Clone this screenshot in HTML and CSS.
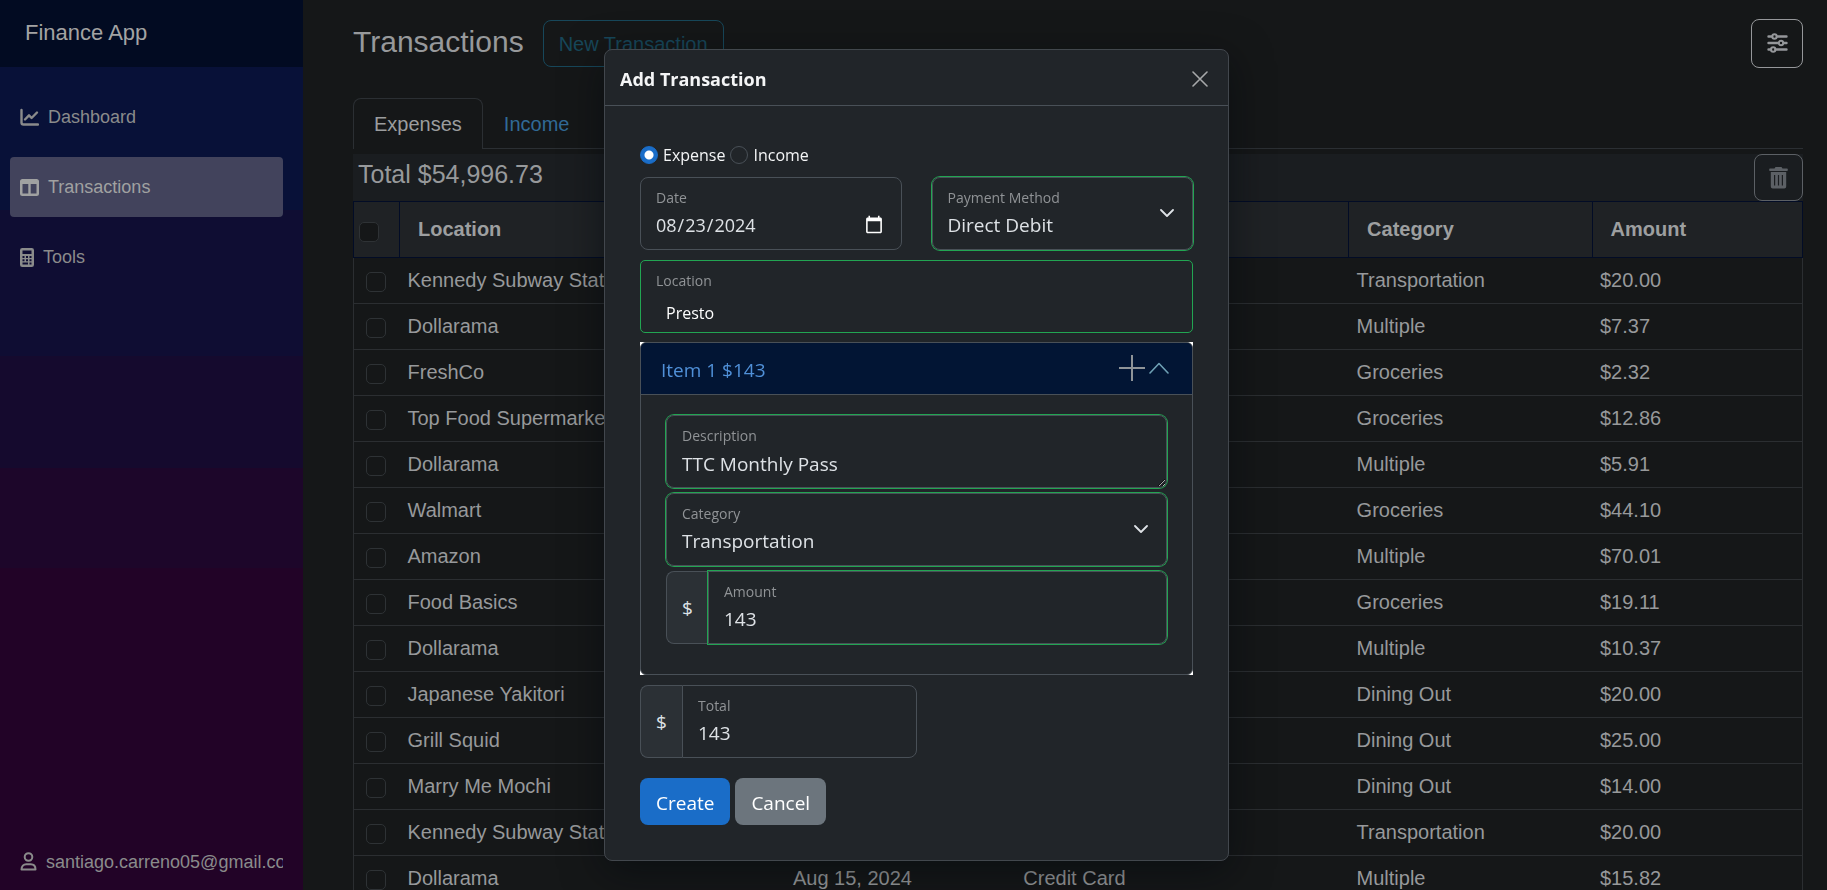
FILE: index.html
```html
<!DOCTYPE html>
<html lang="en">
<head>
<meta charset="utf-8">
<title>Finance App - Transactions</title>
<link rel="stylesheet" href="styles.css">
</head>
<body>
<div class="page">
  <aside class="sidebar">
    <div class="brand-bar"><a class="brand" href="#">Finance App</a></div>
    <nav class="nav">
      <a class="nav-link" href="#">
        <svg width="19" height="19" viewBox="0 0 19 19" fill="none" stroke="currentColor" stroke-width="2.4" stroke-linecap="round" stroke-linejoin="round"><path d="M1.500 2v12.500a2 2 0 0 0 2 2H18"/><path d="M5 11.500l4-4.200 2.600 2.700L17 4.500"/></svg>
        <span>Dashboard</span>
      </a>
      <a class="nav-link active" href="#">
        <svg width="19" height="19" viewBox="0 0 19 19"><path fill="currentColor" fill-rule="evenodd" d="M2.500 1h14A2.500 2.500 0 0 1 19 3.500v12a2.500 2.500 0 0 1-2.500 2.500h-14A2.500 2.500 0 0 1 0 15.500v-12A2.500 2.500 0 0 1 2.500 1zM2.500 6v9.500h5.800V6zM10.700 6v9.500h5.800V6z"/></svg>
        <span>Transactions</span>
      </a>
      <a class="nav-link" href="#">
        <svg width="14" height="19" viewBox="0 0 14 19"><path fill="currentColor" fill-rule="evenodd" d="M2.300 0h9.400A2.300 2.300 0 0 1 14 2.300v14.400a2.300 2.300 0 0 1-2.300 2.300H2.300A2.300 2.300 0 0 1 0 16.700V2.300A2.300 2.300 0 0 1 2.300 0zM2.500 2.500v3.500h9V2.500zM2.500 8v2h2V8zM6 8v2h2V8zM9.500 8v2h2V8zM2.500 11.300v2h2v-2zM6 11.300v2h2v-2zM9.500 11.300v2h2v-2zM2.500 14.600v2H8v-2zM9.500 14.600v2h2v-2z"/></svg>
        <span>Tools</span>
      </a>
      <a class="nav-link account" href="#">
        <svg width="17" height="19" viewBox="0 0 17 19" fill="none" stroke="currentColor" stroke-width="2"><circle cx="8.500" cy="5" r="3.800"/><path stroke-linejoin="round" d="M1.500 17.500c0-3.400 2-5.300 4.800-5.300h4.400c2.800 0 4.800 1.900 4.800 5.300z"/></svg>
        <span>santiago.carreno05@gmail.com</span>
      </a>
    </nav>
  </aside>

  <main class="content">
    <header class="page-head">
      <h1>Transactions</h1>
      <button class="btn-new" type="button">New Transaction</button>
      <button class="btn-filter" type="button" aria-label="Filters">
        <svg width="21" height="20" viewBox="0 0 21 20" fill="none" stroke="currentColor" stroke-width="2.400" stroke-linecap="round"><path d="M1.500 3.500h3.500M10 3.500h9.500M1.500 10h9.500M17 10h2.500M1.500 16.500h2.500M8.500 16.500h11"/><circle cx="7.500" cy="3.500" r="2.200" stroke-width="2"/><circle cx="14" cy="10" r="2.200" stroke-width="2"/><circle cx="6.200" cy="16.500" r="2.200" stroke-width="2"/></svg>
      </button>
    </header>

    <nav class="tabs">
      <a class="tab active" href="#">Expenses</a>
      <a class="tab" href="#">Income</a>
    </nav>

    <div class="summary">
      <span class="summary-total">Total $54,996.73</span>
      <button class="btn-trash" type="button" aria-label="Delete">
        <svg width="19" height="22" viewBox="0 0 19 22"><path fill="currentColor" fill-rule="evenodd" d="M6.500 0h6l1 1.500H18a.8.8 0 0 1 .8.8v1a.8.8 0 0 1-.8.8H1a.8.8 0 0 1-.8-.8v-1a.8.8 0 0 1 .8-.8h4.500zM1.800 5h15.400v14.500a2 2 0 0 1-2 2H3.800a2 2 0 0 1-2-2zM5 8v10.500h1.200V8zM8.900 8v10.500h1.200V8zM12.800 8v10.500H14V8z"/></svg>
      </button>
    </div>

    <table class="grid">
      <colgroup><col class="c-check"><col class="c-location"><col class="c-date"><col class="c-method"><col class="c-category"><col class="c-amount"></colgroup>
      <thead>
        <tr><th><input class="check" type="checkbox" aria-label="Select all"></th><th>Location</th><th></th><th></th><th>Category</th><th>Amount</th></tr>
      </thead>
      <tbody>
        <tr><td><input class="check" type="checkbox" aria-label="Select row"></td><td>Kennedy Subway Station</td><td></td><td></td><td>Transportation</td><td>$20.00</td></tr>
        <tr><td><input class="check" type="checkbox" aria-label="Select row"></td><td>Dollarama</td><td></td><td></td><td>Multiple</td><td>$7.37</td></tr>
        <tr><td><input class="check" type="checkbox" aria-label="Select row"></td><td>FreshCo</td><td></td><td></td><td>Groceries</td><td>$2.32</td></tr>
        <tr><td><input class="check" type="checkbox" aria-label="Select row"></td><td>Top Food Supermarket</td><td></td><td></td><td>Groceries</td><td>$12.86</td></tr>
        <tr><td><input class="check" type="checkbox" aria-label="Select row"></td><td>Dollarama</td><td></td><td></td><td>Multiple</td><td>$5.91</td></tr>
        <tr><td><input class="check" type="checkbox" aria-label="Select row"></td><td>Walmart</td><td></td><td></td><td>Groceries</td><td>$44.10</td></tr>
        <tr><td><input class="check" type="checkbox" aria-label="Select row"></td><td>Amazon</td><td></td><td></td><td>Multiple</td><td>$70.01</td></tr>
        <tr><td><input class="check" type="checkbox" aria-label="Select row"></td><td>Food Basics</td><td></td><td></td><td>Groceries</td><td>$19.11</td></tr>
        <tr><td><input class="check" type="checkbox" aria-label="Select row"></td><td>Dollarama</td><td></td><td></td><td>Multiple</td><td>$10.37</td></tr>
        <tr><td><input class="check" type="checkbox" aria-label="Select row"></td><td>Japanese Yakitori</td><td></td><td></td><td>Dining Out</td><td>$20.00</td></tr>
        <tr><td><input class="check" type="checkbox" aria-label="Select row"></td><td>Grill Squid</td><td></td><td></td><td>Dining Out</td><td>$25.00</td></tr>
        <tr><td><input class="check" type="checkbox" aria-label="Select row"></td><td>Marry Me Mochi</td><td></td><td></td><td>Dining Out</td><td>$14.00</td></tr>
        <tr><td><input class="check" type="checkbox" aria-label="Select row"></td><td>Kennedy Subway Station</td><td></td><td></td><td>Transportation</td><td>$20.00</td></tr>
        <tr><td><input class="check" type="checkbox" aria-label="Select row"></td><td>Dollarama</td><td>Aug 15, 2024</td><td>Credit Card</td><td>Multiple</td><td>$15.82</td></tr>
      </tbody>
    </table>
  </main>
</div>

<div class="overlay">
  <section class="modal" role="dialog" aria-labelledby="modal-title">
    <header class="modal-head">
      <h2 id="modal-title">Add Transaction</h2>
      <button class="btn-close" type="button" aria-label="Close">
        <svg width="16" height="16" viewBox="0 0 16 16" fill="none" stroke="currentColor" stroke-width="1.600" stroke-linecap="round"><path d="M1 1l14 14M15 1L1 15"/></svg>
      </button>
    </header>
    <form class="modal-body">
      <div class="radios">
        <input class="radio" type="radio" name="kind" id="kind-expense" checked><label for="kind-expense">Expense</label>
        <input class="radio" type="radio" name="kind" id="kind-income"><label for="kind-income">Income</label>
      </div>

      <div class="row">
        <div class="field">
          <input class="control" type="date" id="date" value="2024-08-23">
          <label for="date">Date</label>
        </div>
        <div class="field valid">
          <select class="control" id="method"><option>Direct Debit</option></select>
          <label for="method">Payment Method</label>
          <svg class="chevron" width="14" height="9" viewBox="0 0 14 9" fill="none" stroke="currentColor" stroke-width="1.800" stroke-linecap="round" stroke-linejoin="round"><path d="M1 1l6 6L13 1"/></svg>
        </div>
      </div>

      <div class="field location">
        <input class="control" type="text" id="location" value="Presto">
        <label for="location">Location</label>
      </div>

      <div class="items">
        <div class="item">
          <div class="item-head">
            <span class="item-title">Item 1 $143</span>
            <button class="icon-btn plus" type="button" aria-label="Add item">
              <svg width="26" height="26" viewBox="0 0 26 26" fill="none" stroke="currentColor" stroke-width="2"><path d="M13 0v26M0 13h26"/></svg>
            </button>
            <button class="icon-btn toggle" type="button" aria-label="Collapse item">
              <svg width="20" height="12" viewBox="0 0 20 12" fill="none" stroke="currentColor" stroke-width="1.600" stroke-linecap="round" stroke-linejoin="round"><path d="M1 11l9-9.500L19 11"/></svg>
            </button>
          </div>
          <div class="item-body">
            <div class="field valid">
              <textarea class="control" id="description" rows="1">TTC Monthly Pass</textarea>
              <label for="description">Description</label>
            </div>
            <div class="field valid">
              <select class="control" id="category"><option>Transportation</option></select>
              <label for="category">Category</label>
              <svg class="chevron" width="14" height="9" viewBox="0 0 14 9" fill="none" stroke="currentColor" stroke-width="1.800" stroke-linecap="round" stroke-linejoin="round"><path d="M1 1l6 6L13 1"/></svg>
            </div>
            <div class="group">
              <span class="prefix">$</span>
              <div class="field valid">
                <input class="control" type="text" id="amount" value="143">
                <label for="amount">Amount</label>
              </div>
            </div>
          </div>
        </div>
      </div>

      <div class="group total">
        <span class="prefix">$</span>
        <div class="field">
          <input class="control" type="text" id="total" value="143">
          <label for="total">Total</label>
        </div>
      </div>

      <div class="actions">
        <button class="btn primary" type="button">Create</button>
        <button class="btn secondary" type="button">Cancel</button>
      </div>
    </form>
  </section>
</div>
</body>
</html>
```
FILE: styles.css
```css
* { box-sizing: border-box; }

body {
  margin: 0;
  height: 100vh;
  overflow: hidden;
  background: #151718;
  color: #97999b;
  color-scheme: dark;
  font: 20px/30px "Liberation Sans", Arial, sans-serif;
}

a { color: inherit; text-decoration: none; }
h1, h2 { margin: 0; }
button, input, select, textarea { font: inherit; color: inherit; margin: 0; }

.page { display: flex; height: 100vh; overflow: hidden; }

/* Sidebar */
.sidebar {
  display: flex;
  flex-direction: column;
  flex: 0 0 303px;
  min-width: 0;
  background: linear-gradient(#081138 0 210px, #0f0d33 210px 356px, #150a2e 356px 468px, #1d062a 468px 568px, #220327 568px);
}
.brand-bar {
  display: flex;
  align-items: center;
  height: 67px;
  padding: 0 25px 2px;
  background: #020b22;
}
.brand { font-size: 22px; color: #a3a3a3; }
.nav {
  display: flex;
  flex: 1;
  flex-direction: column;
  gap: 10px;
  padding: 20px 20px 0 10px;
}
.nav-link {
  display: flex;
  align-items: center;
  gap: 9px;
  height: 60px;
  padding-left: 10px;
  border-radius: 4px;
  overflow: hidden;
  font-size: 18px;
  color: #8a8b8b;
}
.nav-link svg { flex: none; }
.nav-link.active { background: #42435c; color: #a0a1a1; }
.nav-link.account { margin-top: auto; padding-top: 3px; }

/* Main content */
.content { flex: 1; min-width: 0; padding: 19px 24px 0 50px; }
.page-head { display: flex; align-items: center; height: 49px; }
.page-head h1 { margin-right: 19px; padding-bottom: 4px; font-size: 30px; font-weight: 400; line-height: 36px; }
.btn-new, .btn-filter, .btn-trash {
  display: flex;
  align-items: center;
  justify-content: center;
  height: 47px;
  border: 1px solid;
  border-radius: 8px;
  background: none;
}
.btn-new { padding: 0 15px; color: #17475a; }
.btn-filter { width: 52px; height: 49px; padding-bottom: 3px; margin-left: auto; color: #95979a; }
.btn-trash { width: 49px; color: #5c6065; }

.tabs {
  display: flex;
  margin: 30px 0 5px;
  border-bottom: 1px solid #2b2f33;
}
.tab {
  padding: 10px 20px 9px;
  border: 1px solid transparent;
  border-bottom: 0;
  color: #316a96;
}
.tab.active {
  margin-bottom: -1px;
  border-color: #2b2f33;
  border-radius: 8px 8px 0 0;
  background: #151718;
  color: #9b9d9e;
}

.summary {
  display: flex;
  align-items: center;
  justify-content: space-between;
  height: 47px;
  padding-left: 5px;
  background: #1a1d20;
}
.summary-total { padding-bottom: 7px; font-size: 25px; }

.grid {
  width: 100%;
  table-layout: fixed;
  border-collapse: collapse;
}
.c-check { width: 46px; }
.c-location { width: 26.6%; }
.c-date { width: 15.9%; }
.c-method { width: 23%; }
.c-category { width: 16.8%; }
.grid th {
  height: 56px;
  padding: 0 18px 2px;
  border: 1px solid #020c26;
  background: #1f2225;
  text-align: left;
  color: #9d9fa0;
}
.grid th:first-child { padding: 0 5px; }
.grid td {
  height: 46px;
  padding: 0 8px 1px;
  border-bottom: 1px solid #2b2e31;
  white-space: nowrap;
}
.grid td:first-child { padding-left: 12px; border-left: 1px solid #2b2e31; }
.grid td:last-child { border-right: 1px solid #2b2e31; }
.check {
  display: block;
  appearance: none;
  width: 20px;
  height: 20px;
  margin-top: 4px;
  border: 1px solid #2e3235;
  border-radius: 5px;
  background: #151718;
}

/* Dialog */
.overlay {
  position: fixed;
  inset: 0;
  display: flex;
  align-items: flex-start;
  justify-content: center;
  padding: 49px 0 0 6px;
}
.modal {
  width: 625px;
  border: 1px solid #42474d;
  border-radius: 8px;
  background: #212529;
  box-shadow: 0 10px 40px rgba(0, 8, 12, 0.5);
  color: #f4f5f6;
  font-family: "Open Sans", "Noto Sans", sans-serif;
  font-size: 16px;
  line-height: 24px;
}
.modal-head {
  display: flex;
  align-items: center;
  justify-content: space-between;
  height: 56px;
  padding: 3px 15px 0;
  border-bottom: 1px solid #495057;
}
.modal-head h2 { font-size: 18px; font-weight: 700; }
.btn-close {
  display: flex;
  padding: 5px;
  border: 0;
  background: none;
  color: #a6a8a9;
}
.modal-body { padding: 37px 35px 35px; }

.radios { display: flex; align-items: center; height: 24px; margin-bottom: 10px; }
.radio {
  appearance: none;
  width: 18px;
  height: 18px;
  margin-right: 5px;
  border: 1px solid #495057;
  border-radius: 50%;
}
.radio:checked { border-color: #1a6dc8; background: radial-gradient(#fff 0 4px, #1a6dc8 5px); }
.radios label { margin-right: 5px; }

.row { display: grid; grid-template-columns: 1fr 1fr; gap: 30px; margin-bottom: 10px; }

/* Label and control share one grid cell so the label floats inside the box */
.field {
  display: grid;
  grid-template-rows: minmax(0, 1fr);
  min-width: 0;
  height: 73px;
  border: 1px solid #495057;
  border-radius: 8px;
}
.field > * { grid-area: 1 / 1; }
.field label {
  align-self: start;
  justify-self: start;
  padding: 8px 15px;
  font-size: 14px;
  color: #909396;
  pointer-events: none;
}
.control {
  appearance: none;
  width: 100%;
  height: 100%;
  min-width: 0;
  padding: 31px 15px 9px;
  border: 0;
  border-radius: 8px;
  outline: 0;
  background: none;
  font-size: 19px;
  line-height: 30px;
  color: #dee2e6;
}
textarea.control { display: block; padding-top: 33px; overflow: hidden; resize: vertical; }
input[type="date"].control { padding-left: 14px; font-size: 18px; }
input[type="date"]::-webkit-calendar-picker-indicator { width: 20px; height: 20px; padding: 0; margin-right: 2px; }
.valid { box-shadow: 0 0 0 1px #22a552; }
.chevron { align-self: center; justify-self: end; margin-right: 18px; color: #dee2e6; }

.location { margin-bottom: 9px; border-color: #22a552; border-radius: 5px; }
.location .control { padding: 40px 25px 8px; font-size: 16px; line-height: 24px; color: #fff; }

.items { margin-bottom: 10px; background: #fff; }
.item { border: 1px solid #495057; border-radius: 6px; background: #212529; overflow: hidden; }
.item-head {
  display: flex;
  align-items: center;
  height: 52px;
  padding: 0 23px 2px 20px;
  border-bottom: 1px solid #495057;
  background: #021534;
}
.item-title { margin-right: auto; padding-top: 4px; font-size: 19px; color: #5090d8; }
.icon-btn { display: flex; padding: 0; border: 0; background: none; }
.plus { margin-right: 4px; color: #8f9498; }
.toggle { color: #6ea0b4; }
.item-body { display: flex; flex-direction: column; gap: 5px; padding: 20px 25px 30px; }

.group { display: flex; }
.prefix {
  display: flex;
  align-items: center;
  justify-content: center;
  width: 42px;
  border: 1px solid #495057;
  border-right: 0;
  border-radius: 8px 0 0 8px;
  background: #2b3035;
  color: #dee2e6;
  font-size: 19px;
}
.group .field { flex: 1; border-radius: 0 8px 8px 0; }
.total { width: 277px; margin-bottom: 20px; }

.actions { display: flex; gap: 5px; }
.btn {
  height: 47px;
  padding: 2px 16px 0;
  border: 0;
  border-radius: 8px;
  font-size: 19px;
  color: #fff;
}
.primary { background: #1a6dc8; }
.secondary { background: #6c757d; }
```
